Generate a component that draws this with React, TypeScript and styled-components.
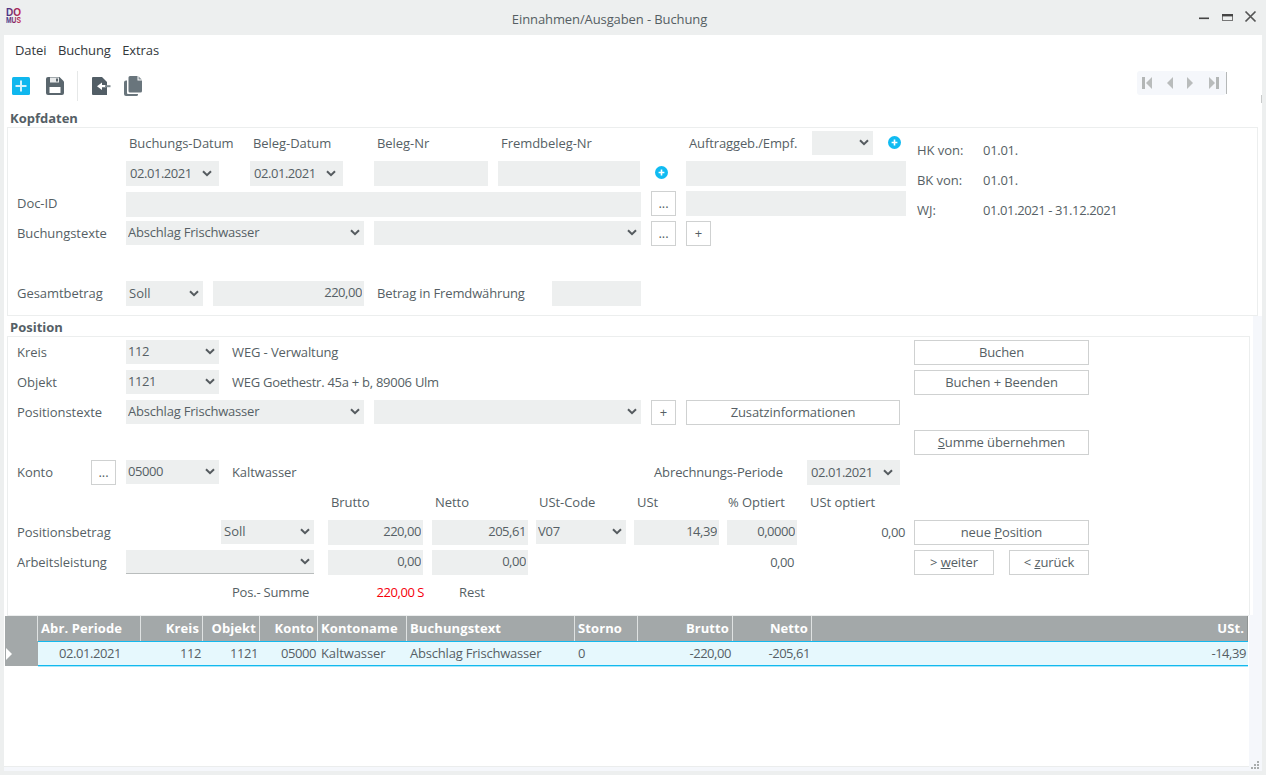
import React from "react";
import styled, { createGlobalStyle } from "styled-components";

const Global = createGlobalStyle`
  html, body { margin: 0; padding: 0; height: 100%; overflow: hidden; }
  body { font-family: "Open Sans", "Liberation Sans", sans-serif; font-size: 13px; color: #565f65; }
  #root { height: 100%; }
`;

const NUM = -0.45;

const Win = styled.div`
  display: flex; flex-direction: column; height: 775px; background: #edefef;
`;
const TitleBar = styled.header`
  height: 35px; flex: none; display: flex; align-items: flex-start;
`;
const LogoBox = styled.div`
  width: 22px; height: 22px; margin: 5px 0 0 5px; flex: none;
`;
const Title = styled.div`
  flex: 1; text-align: center; line-height: 38px; font-size: 13px; color: #555e63; letter-spacing: -0.1px;
`;
const WinControls = styled.div`
  flex: none; width: 60px; margin: 8px 7px 0 7px;
  svg { display: block; }
`;
const Body = styled.main`
  flex: 1; margin: 0 4px 4px; background: #fff; display: flex; flex-direction: column; position: relative; min-height: 0;
  &::after { content: ""; position: absolute; right: 0; top: 60px; width: 1px; height: 8px; background: #c8caca; }
`;
const MenuBar = styled.nav`
  height: 30px; flex: none; display: flex; padding-left: 11px; gap: 11.5px; align-items: center;
`;
const MenuItem = styled.span`
  color: #33383b; font-size: 13px; letter-spacing: -0.1px;
`;
const Toolbar = styled.div`
  height: 43px; flex: none; display: flex; align-items: flex-start; padding-left: 8px; padding-right: 36px;
`;
const ToolIcon = styled.span<{ $ml?: number }>`
  display: block; margin-left: ${p => p.$ml ?? 0}px; margin-top: 11px; height: 20px; svg { display: block; }
`;
const ToolDivider = styled.span`
  width: 1px; height: 30px; background: #e6e8e8; margin: 6px 0 0 13px;
`;
const NavBox = styled.div`
  margin: 6px 0 0 auto; width: 89px; height: 24px; background: #f5f7fb; border-radius: 3px;
  position: relative; svg { display: block; position: absolute; left: 5px; top: 6px; }
  &::after { content: ""; position: absolute; right: -1px; top: 1px; bottom: 1px; width: 1px; background: #b5b8b8; }
`;
const SectionTitle = styled.h2<{ $mt?: number }>`
  margin: ${p => p.$mt ?? 0}px 0 0 6px; height: 19px; line-height: 20px; font-size: 13px; font-weight: 700; color: #555f66; flex: none;
`;
const TopPanel = styled.section`
  flex: none; margin-left: 3px; width: 1251px; height: 189px; box-sizing: border-box;
  border: 1px solid #eceeee; padding: 3px 0 0 9px; display: flex;
`;
const FormColumn = styled.div`
  width: 889px; flex: none;
`;
const InfoColumn = styled.div`
  margin-left: 11px; padding-top: 7px;
`;
const PositionArea = styled.div`
  flex: none; background: #fff; border-right: 9px solid #f5f7fb; height: 299px; box-sizing: border-box;
`;
const PosPanel = styled.section`
  margin: 0 3px 0 3px; height: 280px; box-sizing: border-box; border: 1px solid #eceeee; padding: 3px 0 0 9px;
`;
const Row = styled.div`
  display: flex; height: 30px; align-items: flex-start;
`;
const Label = styled.span<{ $w?: number; $ml?: number; $align?: string; $color?: string; $ls?: number }>`
  display: block; flex: none; line-height: 24px; white-space: nowrap; font-size: 13px;
  width: ${p => (p.$w !== undefined ? `${p.$w}px` : "auto")};
  margin-left: ${p => p.$ml ?? 0}px;
  text-align: ${p => p.$align ?? "left"};
  color: ${p => p.$color ?? "#565f65"};
  letter-spacing: ${p => p.$ls ?? -0.05}px;
`;
const SelectWrap = styled.span<{ $w: number; $h: number; $ml: number; $line?: boolean; $pad: number; $chev: number; $ls: number }>`
  display: block; position: relative; flex: none;
  width: ${p => p.$w}px; height: ${p => p.$h}px; margin-left: ${p => p.$ml}px;
  box-shadow: ${p => (p.$line ? "inset 0 -1px 0 #b9bdbd" : "none")};
  background: #edefef;
  select {
    appearance: none; -webkit-appearance: none; width: 100%; height: 100%; border: 0; background: transparent;
    font: inherit; font-size: 13px; color: #565f65; padding: 0 0 2px ${p => p.$pad}px; margin: 0; outline: none; display: block;
    letter-spacing: ${p => p.$ls}px;
  }
  svg { position: absolute; right: ${p => p.$chev}px; top: 50%; margin-top: -4px; pointer-events: none; }
`;
const Field = styled.input<{ $w: number; $ml?: number; $mt?: number }>`
  display: block; flex: none; box-sizing: border-box; border: 0; outline: none; background: #edefef; height: 25px;
  width: ${p => p.$w}px; margin: ${p => p.$mt ?? 0}px 0 0 ${p => p.$ml ?? 0}px;
  font: inherit; font-size: 13px; color: #565f65; text-align: right; padding: 0 2px 3px 0; letter-spacing: ${NUM}px;
`;
const Btn = styled.button<{ $w: number; $ml?: number }>`
  display: block; flex: none; box-sizing: border-box; height: 25px; padding: 0 0 2px; background: #fff; border: 1px solid #cfd1d1;
  width: ${p => p.$w}px; margin-left: ${p => p.$ml ?? 0}px;
  font: inherit; font-size: 13px; color: #565f65; white-space: nowrap; letter-spacing: -0.1px;
`;
const AddDot = styled.span<{ $ml: number; $mt: number }>`
  display: block; flex: none; width: 13px; height: 13px; margin: ${p => p.$mt}px 0 0 ${p => p.$ml}px; svg { display: block; }
`;
const GridArea = styled.div`
  flex: 1; min-height: 0; border-right: 13px solid #f5f7fb; border-bottom: 4px solid #f5f7fb; padding: 1px 0 0 1px; position: relative;
  &::after { content: ""; position: absolute; left: 0; right: 0; bottom: 0; height: 1px; background: #ebeded; }
`;
const Table = styled.div`
  display: grid;
  grid-template-columns: 33px 103px 62px 57px 58px 89px 168px 63px 95px 79px 436px;
  width: 1243px;
`;
const HeadCell = styled.div<{ $align?: string; $last?: boolean }>`
  background: #a3a8a9; color: #fff; font-weight: 700; font-size: 13px; height: 25px; line-height: 24px; box-sizing: border-box;
  padding: 0 3px; text-align: ${p => p.$align ?? "left"}; letter-spacing: 0.1px;
  border-right: ${p => (p.$last ? "1px solid #8f9494" : "1px solid #dfe2e2")};
  white-space: nowrap;
`;
const DataCell = styled.div<{ $align?: string; $ls: number }>`
  background: #e6f8fd; height: 25px; box-sizing: border-box; line-height: 22px; font-size: 13px; color: #565f65;
  border-top: 1px solid #12b9ee; border-bottom: 1px solid #12b9ee; box-shadow: 0 1px 0 #a8e6f9;
  padding: 0 2px 0 3px; white-space: nowrap; letter-spacing: ${p => p.$ls}px;
  text-align: ${p => p.$align ?? "left"};
`;
const RowHead = styled.div`
  background: #a3a8a9; height: 25px; svg { display: block; margin: 7px 0 0 1px; }
`;
const Grip = styled.svg`
  position: absolute; right: 2px; bottom: 1px; display: block;
`;

const Chevron = () => (
  <svg width="10" height="7" viewBox="0 0 10 7"><path d="M1 1.2 5 5.2 9 1.2" fill="none" stroke="#555b5f" strokeWidth="2" /></svg>
);
type DdProps = { w: number; v?: string; h?: number; ml?: number; line?: boolean; pad?: number; chev?: number; ls?: number };
const Dd = ({ w, v = "", h = 24, ml = 0, line, pad = 2, chev = 4, ls = NUM }: DdProps) => (
  <SelectWrap $w={w} $h={h} $ml={ml} $line={line} $pad={pad} $chev={chev} $ls={ls}>
    <select defaultValue={v} aria-label={v || "Auswahl"}><option value={v}>{v}</option></select>
    <Chevron />
  </SelectWrap>
);
const PlusDot = () => (
  <svg width="13" height="13" viewBox="0 0 13 13">
    <circle cx="6.5" cy="6.5" r="6.5" fill="#10bbf2" />
    <path d="M6.5 3.6v5.8M3.6 6.5h5.8" stroke="#fff" strokeWidth="1.6" />
  </svg>
);

const Logo = () => (
  <svg width="22" height="22" viewBox="0 0 22 22">
    <defs>
      <linearGradient id="lg" x1="0" x2="1" y1="0" y2="0">
        <stop offset="0" stopColor="#3b3a8f" /><stop offset="1" stopColor="#c81f45" />
      </linearGradient>
    </defs>
    <text x="1" y="10.5" fontFamily="'Liberation Sans', sans-serif" fontWeight="700" fontSize="11.5" textLength="15" lengthAdjust="spacingAndGlyphs" fill="url(#lg)">DO</text>
    <text x="1" y="18" fontFamily="'Liberation Sans', sans-serif" fontWeight="700" fontSize="8.5" textLength="15" lengthAdjust="spacingAndGlyphs" fill="url(#lg)">MUS</text>
  </svg>
);

const WindowButtons = () => (
  <svg width="60" height="16" viewBox="0 0 60 16">
    <rect x="0" y="9.5" width="10" height="1.6" fill="#444" />
    <rect x="23.5" y="6.5" width="10" height="6" fill="none" stroke="#777" />
    <rect x="23" y="6" width="11" height="2.4" fill="#444" />
    <path d="M46.5 3.5 56.5 13.5M56.5 3.5 46.5 13.5" stroke="#555" strokeWidth="1.7" fill="none" />
  </svg>
);

const IconAdd = () => (
  <svg width="18" height="20" viewBox="0 0 18 20">
    <rect y="1" width="18" height="18" rx="1.5" fill="#10b7ee" />
    <path d="M9 4.5v11M3.5 10h11" stroke="#d5f2fb" strokeWidth="2" />
  </svg>
);
const IconSave = () => (
  <svg width="18" height="20" viewBox="0 0 18 20">
    <path d="M0 3a2 2 0 0 1 2-2h11.5L18 5.5V17a2 2 0 0 1-2 2H2a2 2 0 0 1-2-2z" fill="#5a666d" />
    <rect x="4" y="1.5" width="9" height="5" fill="#e8eaeb" /><rect x="10" y="2.5" width="2" height="3" fill="#5a666d" />
    <rect x="3.5" y="11" width="11" height="6" fill="#fff" />
  </svg>
);
const IconExit = () => (
  <svg width="20" height="20" viewBox="0 0 20 20">
    <path d="M2 1h9l5 5v13H2a1 1 0 0 1-1-1V2a1 1 0 0 1 1-1z" fill="#525e66" />
    <path d="M6 10.2 11 6.5v2.6h4v2.2h-4v2.6z" fill="#fff" />
    <rect x="14" y="9.2" width="5.5" height="2" fill="#7f8a90" />
  </svg>
);
const IconCopy = () => (
  <svg width="18" height="20" viewBox="0 0 18 20">
    <path d="M0 6.5a2 2 0 0 1 2-2h1V17a1 1 0 0 0 1 1h10v.5a1.500 1.500 0 0 1-1.500 1.500H2a2 2 0 0 1-2-2z" fill="#69757c" />
    <path d="M6 0h7.500v4.500H18V15a1.500 1.500 0 0 1-1.500 1.500H6A1.500 1.500 0 0 1 4.500 15V1.500A1.500 1.500 0 0 1 6 0z" fill="#69757c" />
    <path d="M14.500 0.300 17.800 3.500h-3.300z" fill="#8a949a" />
  </svg>
);
const NavIcons = () => (
  <svg width="80" height="12" viewBox="0 0 80 12">
    <rect x="0" y="0" width="3" height="12" fill="#b3b6b6" />
    <path d="M10 0v12L4 6z" fill="#b9bcbc" />
    <path d="M31 0v12l-6-6z" fill="#b9bcbc" />
    <path d="M45 0v12l6-6z" fill="#b9bcbc" />
    <path d="M67 0v12l6-6z" fill="#b9bcbc" />
    <rect x="74" y="0" width="3" height="12" fill="#b3b6b6" />
  </svg>
);

const cols: { h: string; d: string; ha?: string; da?: string; ls: number }[] = [
  { h: "Abr. Periode", d: "02.01.2021", da: "center", ls: NUM },
  { h: "Kreis", d: "112", ha: "right", da: "right", ls: NUM },
  { h: "Objekt", d: "1121", ha: "right", da: "right", ls: NUM },
  { h: "Konto", d: "05000", ha: "right", da: "right", ls: NUM },
  { h: "Kontoname", d: "Kaltwasser", ls: -0.1 },
  { h: "Buchungstext", d: "Abschlag Frischwasser", ls: -0.2 },
  { h: "Storno", d: "0", ls: 0 },
  { h: "Brutto", d: "-220,00", ha: "right", da: "right", ls: NUM },
  { h: "Netto", d: "-205,61", ha: "right", da: "right", ls: NUM },
  { h: "USt.", d: "-14,39", ha: "right", da: "right", ls: NUM },
];

const TXT = -0.2;

export default function App() {
  return (
    <Win>
      <Global />
      <TitleBar>
        <LogoBox><Logo /></LogoBox>
        <Title>Einnahmen/Ausgaben - Buchung</Title>
        <WinControls><WindowButtons /></WinControls>
      </TitleBar>
      <Body>
        <MenuBar>
          <MenuItem>Datei</MenuItem>
          <MenuItem>Buchung</MenuItem>
          <MenuItem>Extras</MenuItem>
        </MenuBar>
        <Toolbar>
          <ToolIcon><IconAdd /></ToolIcon>
          <ToolIcon $ml={16}><IconSave /></ToolIcon>
          <ToolDivider />
          <ToolIcon $ml={13}><IconExit /></ToolIcon>
          <ToolIcon $ml={13}><IconCopy /></ToolIcon>
          <NavBox><NavIcons /></NavBox>
        </Toolbar>

        <SectionTitle>Kopfdaten</SectionTitle>
        <TopPanel>
          <FormColumn>
            <Row>
              <Label $w={112} />
              <Label $w={124}>Buchungs-Datum</Label>
              <Label $w={124}>Beleg-Datum</Label>
              <Label $w={124}>Beleg-Nr</Label>
              <Label $w={188}>Fremdbeleg-Nr</Label>
              <Label $w={123} $ls={-0.12}>Auftraggeb./Empf.</Label>
              <Dd w={61} />
              <AddDot $ml={15} $mt={5}><PlusDot /></AddDot>
            </Row>
            <Row>
              <Label $w={109} />
              <Dd w={93} h={25} v="02.01.2021" pad={4} chev={7} />
              <Dd w={93} h={25} ml={31} v="02.01.2021" pad={4} chev={7} />
              <Field $w={114} $ml={31} readOnly />
              <Field $w={142} $ml={10} readOnly />
              <AddDot $ml={15} $mt={5}><PlusDot /></AddDot>
              <Field $w={220} $ml={18} readOnly />
            </Row>
            <Row>
              <Label $w={109}>Doc-ID</Label>
              <Field $w={515} $mt={1} readOnly />
              <Btn $w={25} $ml={10}>...</Btn>
              <Field $w={220} $ml={10} readOnly />
            </Row>
            <Row>
              <Label $w={109}>Buchungstexte</Label>
              <Dd w={238} v="Abschlag Frischwasser" ls={TXT} />
              <Dd w={267} ml={10} />
              <Btn $w={25} $ml={10}>...</Btn>
              <Btn $w={25} $ml={10}>+</Btn>
            </Row>
            <Row />
            <Row>
              <Label $w={109}>Gesamtbetrag</Label>
              <Dd w={77} h={25} v="Soll" pad={3} ls={0} />
              <Field $w={151} $ml={10} value="220,00" readOnly />
              <Label $w={175} $ml={13} $ls={-0.14}>Betrag in Fremdwährung</Label>
              <Field $w={89} readOnly />
            </Row>
          </FormColumn>
          <InfoColumn>
            <Row><Label $w={66}>HK von:</Label><Label $ls={-0.3}>01.01.</Label></Row>
            <Row><Label $w={66}>BK von:</Label><Label $ls={-0.3}>01.01.</Label></Row>
            <Row><Label $w={66}>WJ:</Label><Label $ls={-0.4}>01.01.2021 - 31.12.2021</Label></Row>
          </InfoColumn>
        </TopPanel>

        <PositionArea>
          <SectionTitle $mt={1}>Position</SectionTitle>
          <PosPanel>
            <Row>
              <Label $w={109}>Kreis</Label>
              <Dd w={93} v="112" />
              <Label $w={682} $ml={13} $ls={-0.12}>WEG - Verwaltung</Label>
              <Btn $w={175}>Buchen</Btn>
            </Row>
            <Row>
              <Label $w={109}>Objekt</Label>
              <Dd w={93} v="1121" />
              <Label $w={682} $ml={13} $ls={-0.27}>WEG Goethestr. 45a + b, 89006 Ulm</Label>
              <Btn $w={175}>Buchen + Beenden</Btn>
            </Row>
            <Row>
              <Label $w={109}>Positionstexte</Label>
              <Dd w={238} v="Abschlag Frischwasser" ls={TXT} />
              <Dd w={267} ml={10} />
              <Btn $w={25} $ml={10}>+</Btn>
              <Btn $w={214} $ml={10}>Zusatzinformationen</Btn>
            </Row>
            <Row>
              <Label $w={897} />
              <Btn $w={175}><u>S</u>umme übernehmen</Btn>
            </Row>
            <Row>
              <Label $w={74}>Konto</Label>
              <Btn $w={25}>...</Btn>
              <Dd w={93} ml={10} v="05000" />
              <Label $w={422} $ml={13} $ls={-0.1}>Kaltwasser</Label>
              <Label $w={153} $ls={-0.12}>Abrechnungs-Periode</Label>
              <Dd w={93} h={25} v="02.01.2021" pad={4} chev={7} />
            </Row>
            <Row>
              <Label $w={314} />
              <Label $w={104}>Brutto</Label>
              <Label $w={104}>Netto</Label>
              <Label $w={98}>USt-Code</Label>
              <Label $w={91}>USt</Label>
              <Label $w={82}>% Optiert</Label>
              <Label>USt optiert</Label>
            </Row>
            <Row>
              <Label $w={204}>Positionsbetrag</Label>
              <Dd w={93} v="Soll" pad={3} ls={0} />
              <Field $w={95} $ml={14} value="220,00" readOnly />
              <Field $w={96} $ml={9} value="205,61" readOnly />
              <Dd w={90} ml={8} v="V07" ls={-0.2} />
              <Field $w={85} $ml={8} value="14,39" readOnly />
              <Field $w={70} $ml={8} value="0,0000" readOnly />
              <Label $w={108} $align="right" $ls={NUM}>0,00</Label>
              <Btn $w={175} $ml={9}>neue <u>P</u>osition</Btn>
            </Row>
            <Row>
              <Label $w={109}>Arbeitsleistung</Label>
              <Dd w={188} line />
              <Field $w={95} $ml={14} value="0,00" readOnly />
              <Field $w={96} $ml={9} value="0,00" readOnly />
              <Label $w={266} $align="right" $ls={NUM}>0,00</Label>
              <Btn $w={80} $ml={120}>&gt; <u>w</u>eiter</Btn>
              <Btn $w={80} $ml={15}>&lt; <u>z</u>urück</Btn>
            </Row>
            <Row>
              <Label $w={215} />
              <Label $w={140} $ls={-0.2}>Pos.- Summe</Label>
              <Label $w={52} $align="right" $color="#f5000a" $ls={NUM}>220,00 S</Label>
              <Label $ml={35}>Rest</Label>
            </Row>
          </PosPanel>
        </PositionArea>

        <GridArea>
          <Table>
            <HeadCell />
            {cols.map((c, i) => (
              <HeadCell key={c.h} $align={c.ha} $last={i === cols.length - 1}>{c.h}</HeadCell>
            ))}
            <RowHead>
              <svg width="8" height="12" viewBox="0 0 8 12"><path d="M0 0v12l6-6z" fill="#fff" /></svg>
            </RowHead>
            {cols.map(c => (
              <DataCell key={c.h} $align={c.da} $ls={c.ls}>{c.d}</DataCell>
            ))}
          </Table>
        </GridArea>
        <Grip width="9" height="9" viewBox="0 0 9 9" fill="#a9adad">
          <rect x="6" y="0" width="2" height="2" /><rect x="3" y="3" width="2" height="2" /><rect x="6" y="3" width="2" height="2" />
          <rect x="0" y="6" width="2" height="2" /><rect x="3" y="6" width="2" height="2" /><rect x="6" y="6" width="2" height="2" />
        </Grip>
      </Body>
    </Win>
  );
}
